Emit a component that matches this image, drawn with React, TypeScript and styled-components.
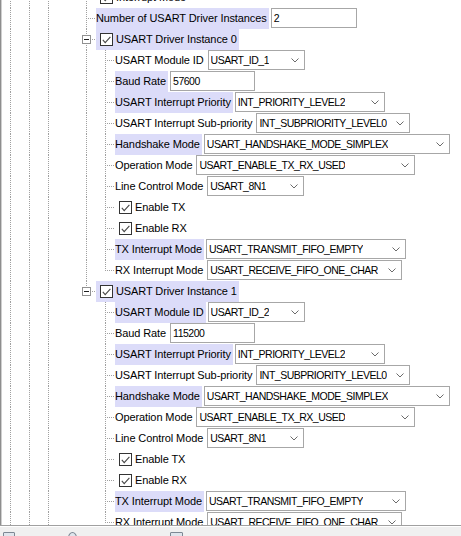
import React from 'react';
import styled, {createGlobalStyle, css} from 'styled-components';

const FONT = `"Liberation Sans", Arial, sans-serif`;
const DOT = '#a0a0a0';
const dotsDown = `repeating-linear-gradient(to bottom, ${DOT} 0 1px, transparent 1px 2px)`;
const dotsRight = `repeating-linear-gradient(to right, ${DOT} 0 1px, transparent 1px 2px)`;

type Item = {
    kind: 'field' | 'combo' | 'check' | 'group',
    label: string,
    value?: string,
    width?: number,
    modified?: boolean,
    checked?: boolean,
    children?: Item[],
}

function instance(index: number, moduleId: string, baud: string, firstModified: boolean): Item {
    return {
        kind: 'group',
        label: `USART Driver Instance ${index}`,
        modified: true,
        checked: true,
        children: [
            {kind: 'combo', label: 'USART Module ID', value: moduleId, width: 97, modified: !firstModified},
            {kind: 'field', label: 'Baud Rate', value: baud, width: 85, modified: firstModified},
            {kind: 'combo', label: 'USART Interrupt Priority', value: 'INT_PRIORITY_LEVEL2', width: 150, modified: true},
            {kind: 'combo', label: 'USART Interrupt Sub-priority', value: 'INT_SUBPRIORITY_LEVEL0', width: 154},
            {kind: 'combo', label: 'Handshake Mode', value: 'USART_HANDSHAKE_MODE_SIMPLEX', width: 246, modified: true},
            {kind: 'combo', label: 'Operation Mode', value: 'USART_ENABLE_TX_RX_USED', width: 219},
            {kind: 'combo', label: 'Line Control Mode', value: 'USART_8N1', width: 97},
            {kind: 'check', label: 'Enable TX', checked: true},
            {kind: 'check', label: 'Enable RX', checked: true},
            {kind: 'combo', label: 'TX Interrupt Mode', value: 'USART_TRANSMIT_FIFO_EMPTY', width: 200, modified: true},
            {kind: 'combo', label: 'RX Interrupt Mode', value: 'USART_RECEIVE_FIFO_ONE_CHAR', width: 195},
        ],
    };
}

const TREE: Item[] = [
    {kind: 'check', label: 'Interrupt Mode', checked: true},
    {kind: 'field', label: 'Number of USART Driver Instances', value: '2', width: 86, modified: true},
    instance(0, 'USART_ID_1', '57600', true),
    instance(1, 'USART_ID_2', '115200', false),
];

// guides above the visible levels: three open ancestors, then one closed
const BASE_GUIDES = [true, true, true, false];

function App() {
    const rows: React.ReactNode[] = [];

    function walk(items: Item[], guides: boolean[]) {
        items.forEach((item, i) => {
            const last = i === items.length - 1;
            rows.push(<TreeRow key={rows.length} item={item} guides={guides} last={last}/>);
            if (item.children) walk(item.children, [...guides, !last]);
        });
    }

    walk(TREE, BASE_GUIDES);

    return (
        <Window>
            <GlobalStyle/>
            <TreePane>
                <TreeList>{rows}</TreeList>
            </TreePane>
            <BottomBar>
                <ToolIcon $w={12} $ml={3}/>
                <ToolIcon $w={9} $ml={53} $round/>
                <ToolIcon $w={13} $ml={93}/>
            </BottomBar>
        </Window>
    );
}

export default App;

function TreeRow({item, guides, last}: { item: Item, guides: boolean[], last: boolean }) {
    return (
        <Row>
            {guides.map((g, i) => <Guide key={i} $line={g}/>)}
            <Connector $last={last}>
                {item.kind === 'group' && <Expander/>}
            </Connector>
            {renderContent(item)}
        </Row>
    );
}

function renderContent(item: Item) {
    if (item.kind === 'check' || item.kind === 'group') {
        return (
            <CheckLabel $modified={item.modified}>
                <CheckBox checked={item.checked}/>
                <span>{item.label}</span>
            </CheckLabel>
        );
    }

    return (
        <>
            <Label $modified={item.modified}>{item.label}</Label>
            {item.kind === 'field'
                ? <TextField $w={item.width || 80}><Value>{item.value}</Value></TextField>
                : (
                    <Combo $w={item.width || 80}>
                        <Value>{item.value}</Value>
                        <Chevron/>
                    </Combo>
                )}
        </>
    );
}

function CheckBox({checked}: { checked?: boolean }) {
    return (
        <Box>
            {checked &&
                <svg width="9" height="8" viewBox="0 0 9 8">
                    <polyline points="0.8,3.8 3.2,6.6 8.4,0.8" fill="none" stroke="#474747" strokeWidth="1.1"/>
                </svg>
            }
        </Box>
    );
}

function Chevron() {
    return (
        <ChevronSvg width="8" height="5" viewBox="0 0 8 5">
            <polyline points="0.5,0.5 4,4 7.5,0.5" fill="none" stroke="#6b6b6b" strokeWidth="1"/>
        </ChevronSvg>
    );
}

const GlobalStyle = createGlobalStyle`
  html, body {
    margin: 0;
    padding: 0;
    background: #ffffff;
    font-family: ${FONT};
  }
`;

const Window = styled.div`
  width: 461px;
  height: 536px;
  display: flex;
  flex-direction: column;
  overflow: hidden;
  font-family: ${FONT};
  font-size: 11px;
  letter-spacing: -0.1px;
  color: #000000;
`;

const TreePane = styled.div`
  flex: 0 0 525px;
  box-sizing: border-box;
  overflow: hidden;
  background: #ffffff;
  border-left: 1px solid #8e8e8e;
  box-shadow: inset 1px 0 0 #cfcfcf;
  padding-left: 1px;
`;

const TreeList = styled.div`
  display: flex;
  flex-direction: column;
  margin-top: -13px;
`;

const Row = styled.div`
  display: flex;
  align-items: stretch;
  height: 21px;
  flex: 0 0 21px;
  white-space: nowrap;
`;

const Guide = styled.div<{ $line: boolean }>`
  flex: 0 0 19px;
  ${({$line}) => $line && css`
    background: ${dotsDown} 8px 0 / 1px 100% no-repeat;
  `}
`;

const Connector = styled.div<{ $last: boolean }>`
  flex: 0 0 18px;
  display: flex;
  align-items: center;
  padding-left: 4px;
  box-sizing: border-box;
  background: ${dotsRight} 10px 10px / 8px 1px no-repeat,
  ${dotsDown} 8px 0 / 1px ${({$last}) => ($last ? '11px' : '100%')} no-repeat;
`;

const Expander = styled.span`
  width: 9px;
  height: 9px;
  box-sizing: border-box;
  border: 1px solid #919191;
  background: linear-gradient(#1f1f1f, #1f1f1f) center / 5px 1px no-repeat, #ffffff;
`;

const highlight = css<{ $modified?: boolean }>`
  background: ${({$modified}) => ($modified ? '#dcdcf9' : 'transparent')};
`;

const Label = styled.span<{ $modified?: boolean }>`
  ${highlight};
  line-height: 21px;
  padding-right: 2px;
`;

const CheckLabel = styled.span<{ $modified?: boolean }>`
  ${highlight};
  display: flex;
  align-items: center;
  gap: 3px;
  padding: 0 2px 0 4px;
  line-height: 21px;
`;

const Box = styled.span`
  flex: none;
  width: 13px;
  height: 13px;
  box-sizing: border-box;
  border: 1px solid #333333;
  background: #ffffff;
  display: flex;
  align-items: center;
  justify-content: center;
`;

const fieldBase = css<{ $w: number }>`
  align-self: flex-start;
  flex: none;
  width: ${({$w}) => $w}px;
  height: 20px;
  box-sizing: border-box;
  margin-left: 2px;
  border: 1px solid #a7a7a7;
  background: #ffffff;
  padding-left: 2px;
  line-height: 18px;
`;

const TextField = styled.div<{ $w: number }>`
  ${fieldBase};
`;

const Combo = styled.div<{ $w: number }>`
  ${fieldBase};
  display: flex;
  align-items: center;
  justify-content: space-between;
  padding-right: 5px;
`;

const Value = styled.span`
  overflow: hidden;
  font-size: 10.5px;
  letter-spacing: -0.5px;
`;

const ChevronSvg = styled.svg`
  flex: none;
`;

const BottomBar = styled.div`
  flex: 1;
  display: flex;
  align-items: flex-start;
  background: #f0f0f0;
  border-top: 1px solid #a0a0a0;
  box-shadow: inset 0 1px 0 #ffffff;
  padding-top: 6px;
`;

const ToolIcon = styled.span<{ $w: number, $ml: number, $round?: boolean }>`
  flex: none;
  width: ${({$w}) => $w}px;
  height: 12px;
  margin-left: ${({$ml}) => $ml}px;
  box-sizing: border-box;
  border: 1px solid #7d8894;
  background: #dfe5ec;
  border-radius: ${({$round}) => ($round ? '50%' : '1px')};
`;
